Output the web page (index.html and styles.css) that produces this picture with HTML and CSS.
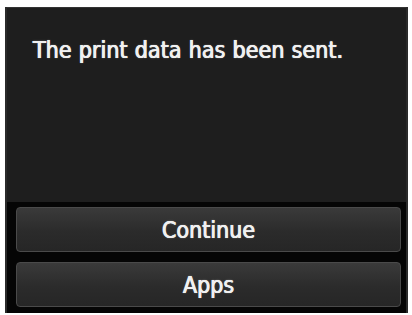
FILE: index.html
```html
<!DOCTYPE html>
<html>
<head>
<meta charset="utf-8">
<link rel="stylesheet" href="styles.css">
</head>
<body>
<div class="screen">
  <div class="message">
    <p class="msg-text">The print data has been sent.</p>
  </div>
  <div class="actions">
    <div class="btn">Continue</div>
    <div class="btn">Apps</div>
  </div>
</div>
</body>
</html>
```

FILE: styles.css
```css
html, body {
  margin: 0;
  padding: 0;
  background: #ffffff;
}
body {
  width: 412px;
  height: 315px;
  overflow: hidden;
  padding-top: 7px;
  padding-left: 5px;
  box-sizing: border-box;
}
.screen {
  width: 403px;
  height: 306px;
  background: #050505;
  border-left: 2px solid #2a2a2a;
  border-right: 2px solid #2a2a2a;
  box-sizing: border-box;
  display: flex;
  flex-direction: column;
}
.message {
  height: 195px;
  background: #1e1e1e;
  border-top: 1px solid #333;
  box-sizing: border-box;
  padding: 29px 0 0 26px;
}
.msg-text {
  margin: 0;
  color: #f0f0f0;
  font-family: "DejaVu Sans Condensed", "DejaVu Sans", sans-serif;
  font-stretch: condensed;
  font-size: 23px;
  letter-spacing: 0.05px;
  word-spacing: 0.5px;
  text-shadow: 0.4px 0 0 #f0f0f0, -0.4px 0 0 #f0f0f0, 0 0 2px rgba(255,255,255,0.35);
}
.actions {
  display: flex;
  flex-direction: column;
  gap: 10px;
  padding: 5px 5px 0 9px;
}
.btn {
  height: 45px;
  box-sizing: border-box;
  border: 1px solid #4a4a4a;
  border-radius: 4px;
  background: linear-gradient(#3a3a3a, #2b2b2b 55%, #262626);
  color: #f0f0f0;
  font-family: "DejaVu Sans Condensed", "DejaVu Sans", sans-serif;
  font-stretch: condensed;
  font-size: 23px;
  display: flex;
  align-items: center;
  justify-content: center;
  text-shadow: 0.4px 0 0 #f0f0f0, -0.4px 0 0 #f0f0f0, 0 0 2px rgba(255,255,255,0.35);
}
```
